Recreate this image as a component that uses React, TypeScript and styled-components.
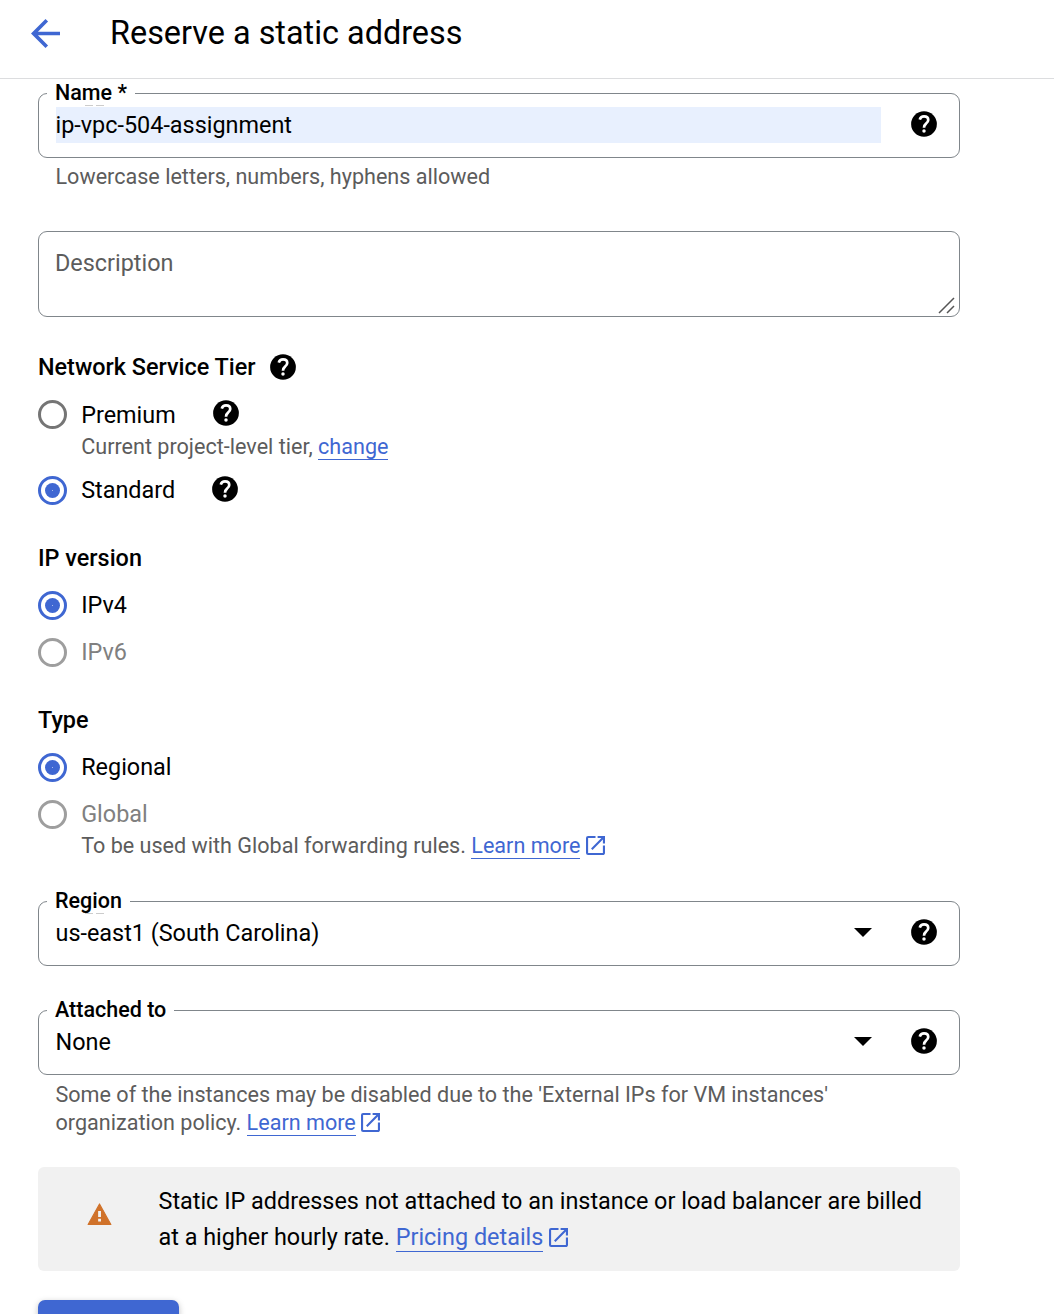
import React from 'react';
import styled, { createGlobalStyle, css } from 'styled-components';

const GlobalStyle = createGlobalStyle`
  html, body { margin: 0; background: #fff; overflow: hidden; }
  *, *::before, *::after { box-sizing: border-box; }
`;

const Page = styled.div`
  height: 1314px;
  overflow: hidden;
  background: #fff;
  color: #000;
  font-family: Roboto, 'Noto Sans', sans-serif;
  font-size: 23.4px;
  line-height: 28px;
`;

const Header = styled.header`
  display: flex;
  align-items: center;
  height: 79px;
  padding: 0 0 11px 31px;
  border-bottom: 1px solid #dcdddf;
`;

const Title = styled.h1`
  margin: 0 0 0 50px;
  padding-bottom: 1px;
  font-size: 32.4px;
  line-height: 40px;
  font-weight: 400;
  white-space: nowrap;
`;

const Form = styled.main`
  width: 922px;
  margin: 14px 0 0 38px;
`;

const Field = styled.div<{ $gap?: number }>`
  position: relative;
  display: flex;
  align-items: center;
  height: 65px;
  margin-top: ${p => p.$gap ?? 0}px;
  padding: 0 22px 2px 16.5px;
  border: 1px solid #80868b;
  border-radius: 9px;
`;

const FieldLabel = styled.label<{ $mark?: boolean }>`
  position: absolute;
  top: -14px;
  left: 8px;
  padding: 0 8px;
  background: #fff;
  font-size: 21.5px;
  line-height: 26px;
  font-weight: 500;
  white-space: nowrap;
  ${p => p.$mark && css`
    &::before, &::after {
      content: '';
      position: absolute;
      bottom: 0;
      left: 38px;
      width: 8px;
      height: 1px;
      background: #ccc;
    }
    &::after { left: 49px; }
  `}
`;

const FieldValue = styled.div<{ $filled?: boolean }>`
  flex: none;
  width: 825.5px;
  height: 36px;
  line-height: 36px;
  background: ${p => (p.$filled ? '#e8f0fe' : 'transparent')};
  white-space: nowrap;
`;

const SelectValue = styled.div`
  flex: 1;
  line-height: 36px;
`;

const Arrow = styled.span`
  width: 18px;
  height: 9px;
  margin-right: 39px;
  background: #000;
  clip-path: polygon(0 0, 100% 0, 50% 100%);
`;

const IconSlot = styled.span<{ $gap?: number; $lift?: number }>`
  display: inline-flex;
  width: 26px;
  height: 26px;
  margin-left: ${p => (p.$gap !== undefined ? `${p.$gap}px` : 'auto')};
  margin-bottom: ${p => p.$lift ?? 0}px;
`;

const Link = styled.a`
  display: inline-block;
  height: 27px;
  line-height: 28px;
  border-bottom: 1px solid #3f67d2;
  color: #3f67d2;
  text-decoration: none;
  vertical-align: top;
`;

const Hint = styled.p<{ $top: number; $left: number }>`
  margin: ${p => p.$top}px 0 0;
  padding-left: ${p => p.$left}px;
  color: #5c5c5c;
  font-size: 21.58px;
  line-height: 28px;
  white-space: nowrap;
`;

const Description = styled.div`
  position: relative;
  height: 86px;
  margin-top: 40px;
  padding: 17px 16px;
  border: 1px solid #80868b;
  border-radius: 9px;
  color: #5c5c5c;
`;

const Grip = styled.svg`
  position: absolute;
  right: 4px;
  bottom: 2px;
`;

const Heading = styled.h2<{ $top: number }>`
  display: flex;
  align-items: center;
  height: 28px;
  margin: ${p => p.$top}px 0 19px;
  font-size: 23.4px;
  line-height: 28px;
  font-weight: 500;
  white-space: nowrap;
`;

const Option = styled.label<{ $gap?: number; $disabled?: boolean }>`
  display: flex;
  align-items: center;
  height: 29px;
  margin-top: ${p => p.$gap ?? 0}px;
  color: ${p => (p.$disabled ? '#808080' : '#000')};
  white-space: nowrap;
`;

const Dial = styled.span<{ $tone: string }>`
  display: flex;
  align-items: center;
  justify-content: center;
  width: 29px;
  height: 29px;
  margin-right: 14.2px;
  border: 3px solid ${p => p.$tone};
  border-radius: 50%;
`;

const Dot = styled.span`
  width: 15px;
  height: 15px;
  border-radius: 50%;
  background: radial-gradient(circle, #a9bbec 0 0.6px, #3f67d2 0.9px);
`;

const OptionText = styled.span<{ $width?: number; $lift: number }>`
  width: ${p => (p.$width ? `${p.$width}px` : 'auto')};
  padding-bottom: ${p => p.$lift}px;
`;

const LaunchSvg = styled.svg`
  margin-left: 5.5px;
  vertical-align: -2px;
`;

const Banner = styled.aside`
  display: flex;
  align-items: center;
  height: 104px;
  margin-top: 30px;
  padding-left: 49px;
  border-radius: 6px;
  background: #f1f1f1;
`;

const WarningSvg = styled.svg`
  margin-bottom: 10px;
`;

const BannerText = styled.p`
  margin: 0 0 0 46.5px;
  line-height: 36px;
  white-space: nowrap;

  ${Link} {
    height: 33px;
    line-height: 36px;
  }
`;

const Submit = styled.button`
  display: block;
  width: 141px;
  height: 58px;
  margin-top: 29px;
  border: 0;
  border-radius: 7px;
  background: #3f67d2;
  box-shadow: 0 2px 6px rgba(0, 0, 0, 0.25);
`;

function Help({ gap, lift }: { gap?: number; lift?: number }) {
  return (
    <IconSlot $gap={gap} $lift={lift}>
      <svg width="26" height="26" viewBox="1.9 1.9 20.2 20.2">
        <circle cx="12" cy="12" r="10" />
        <circle cx="12" cy="17.5" r="1.35" fill="#fff" />
        <path
          d="M8.7 8.6C9.2 7 10.4 6.1 12 6.1c1.9 0 3.3 1.1 3.3 2.8 0 1.3-.8 2-1.7 2.8-1.1.9-1.6 1.5-1.6 3.2"
          fill="none"
          stroke="#fff"
          strokeWidth="2.1"
        />
      </svg>
    </IconSlot>
  );
}

function Launch() {
  return (
    <LaunchSvg width="19" height="19" viewBox="3 3 18 18" fill="#3f67d2">
      <path d="M19 19H5V5h7V3H5a2 2 0 0 0-2 2v14a2 2 0 0 0 2 2h14c1.1 0 2-.9 2-2v-7h-2v7zM14 3v2h3.59l-9.83 9.83 1.41 1.41L19 6.41V10h2V3h-7z" />
    </LaunchSvg>
  );
}

interface RadioProps {
  label: string;
  checked?: boolean;
  disabled?: boolean;
  gap?: number;
  width?: number;
  help?: boolean;
  lift?: number;
}

function Radio({ label, checked, disabled, gap, width, help, lift = 2 }: RadioProps) {
  const tone = checked ? '#3f67d2' : disabled ? '#9e9e9e' : '#757575';
  return (
    <Option $gap={gap} $disabled={disabled}>
      <Dial $tone={tone}>{checked && <Dot />}</Dial>
      <OptionText $width={width} $lift={lift}>{label}</OptionText>
      {help && <Help gap={0} lift={3} />}
    </Option>
  );
}

export default function App() {
  return (
    <>
      <GlobalStyle />
      <Page>
        <Header>
          <svg width="29" height="29" viewBox="4 4 16 16" fill="#3f67d2">
            <path d="M20 11H7.83l5.59-5.59L12 4l-8 8 8 8 1.41-1.41L7.83 13H20v-2z" />
          </svg>
          <Title>Reserve a static address</Title>
        </Header>
        <Form>
          <Field>
            <FieldLabel $mark>Name *</FieldLabel>
            <FieldValue $filled>ip-vpc-504-assignment</FieldValue>
            <Help lift={1} />
          </Field>
          <Hint $top={5} $left={17.5}>Lowercase letters, numbers, hyphens allowed</Hint>

          <Description>
            Description
            <Grip width="17" height="17" viewBox="0 0 17 17" stroke="#555" strokeWidth="1.5">
              <path d="M1 16 16 1M9 16l7-7" />
            </Grip>
          </Description>

          <Heading $top={36}>
            Network Service Tier
            <Help gap={14.6} />
          </Heading>
          <Radio label="Premium" width={132} help lift={0} />
          <Hint $top={4} $left={43.2}>
            Current project-level tier, <Link>change</Link>
          </Hint>
          <Radio label="Standard" checked gap={15} width={131} help />

          <Heading $top={39}>IP version</Heading>
          <Radio label="IPv4" checked />
          <Radio label="IPv6" disabled gap={18} />

          <Heading $top={39}>Type</Heading>
          <Radio label="Regional" checked />
          <Radio label="Global" disabled gap={18} />
          <Hint $top={3} $left={43.2}>
            To be used with Global forwarding rules. <Link>Learn more</Link>
            <Launch />
          </Hint>

          <Field $gap={41}>
            <FieldLabel $mark>Region</FieldLabel>
            <SelectValue>us-east1 (South Carolina)</SelectValue>
            <Arrow />
            <Help gap={0} lift={1} />
          </Field>
          <Field $gap={44}>
            <FieldLabel>Attached to</FieldLabel>
            <SelectValue>None</SelectValue>
            <Arrow />
            <Help gap={0} lift={1} />
          </Field>
          <Hint $top={6} $left={17.5}>
            Some of the instances may be disabled due to the 'External IPs for VM instances'
            <br />
            organization policy. <Link>Learn more</Link>
            <Launch />
          </Hint>

          <Banner>
            <WarningSvg width="25" height="22" viewBox="1 2 22 19" preserveAspectRatio="none">
              <path d="M2 20.6 12 2.8l10 17.8z" fill="#d0722a" stroke="#d0722a" strokeWidth="1" strokeLinejoin="round" />
              <path d="M10.8 9h2.5v5h-2.5zM10.8 15.6h2.5V18h-2.5z" fill="#f1f1f1" />
            </WarningSvg>
            <BannerText>
              Static IP addresses not attached to an instance or load balancer are billed
              <br />
              at a higher hourly rate. <Link>Pricing details</Link>
              <Launch />
            </BannerText>
          </Banner>
          <Submit aria-label="Reserve" />
        </Form>
      </Page>
    </>
  );
}
